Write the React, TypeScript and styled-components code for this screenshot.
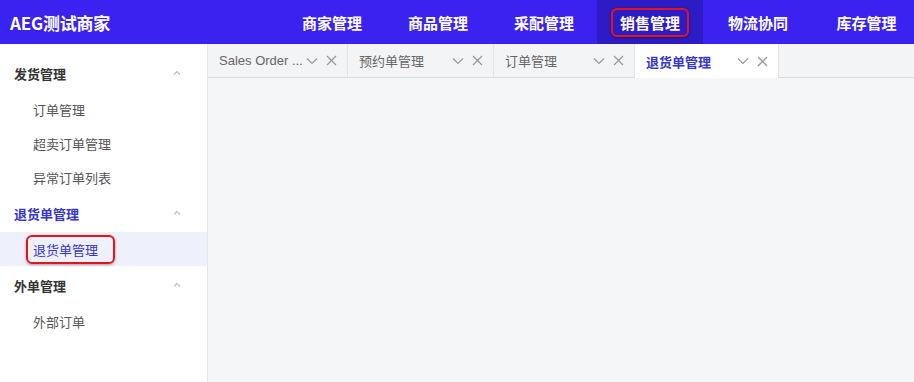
import React from "react";
import styled, { createGlobalStyle } from "styled-components";

const Global = createGlobalStyle`
  html, body { margin: 0; padding: 0; }
  body {
    font-family: "Inter", "Noto Sans CJK SC", sans-serif;
    background: #f5f6f8;
  }
  * { box-sizing: border-box; }
`;

const Page = styled.div`
  width: 914px;
  height: 382px;
  display: flex;
  flex-direction: column;
  overflow: hidden;
`;

const Header = styled.header`
  height: 44px;
  background: #3a22f0;
  display: flex;
  align-items: stretch;
  flex-shrink: 0;
`;

const Logo = styled.div`
  width: 279px;
  flex-shrink: 0;
  padding-left: 10px;
  display: flex;
  align-items: center;
  color: #fff;
  font-family: "Noto Sans CJK SC", sans-serif;
  font-weight: 700;
  font-size: 17px;
  letter-spacing: -0.2px;
`;

const Nav = styled.nav`
  display: flex;
  align-items: stretch;
`;

const NavItem = styled.div<{ $active?: boolean; $w: number }>`
  width: ${(p) => p.$w}px;
  flex-shrink: 0;
  display: flex;
  align-items: center;
  justify-content: center;
  color: #fff;
  font-family: "Noto Sans CJK SC", sans-serif;
  font-weight: 600;
  font-size: 15px;
  background: ${(p) => (p.$active ? "#2d1bc6" : "transparent")};
`;

const Mark = styled.span`
  border: 2px solid #e4141b;
  border-radius: 6px;
  box-shadow: 0 1px 3px rgba(0, 0, 0, 0.35);
  padding: 2px 7px;
  margin: 0 -9px;
`;

const Body = styled.div`
  flex: 1;
  display: flex;
  min-height: 0;
`;

const Sidebar = styled.aside`
  width: 208px;
  background: #fff;
  border-right: 1px solid #e6e6e6;
  padding-top: 10px;
  flex-shrink: 0;
`;

const GroupHead = styled.div<{ $active?: boolean }>`
  height: 38px;
  display: flex;
  align-items: center;
  justify-content: space-between;
  padding: 0 26px 0 14px;
  font-family: "Noto Sans CJK SC", sans-serif;
  font-weight: 700;
  font-size: 13px;
  color: ${(p) => (p.$active ? "#3535c8" : "#333")};
`;

const Item = styled.div<{ $active?: boolean }>`
  height: 34px;
  display: flex;
  align-items: center;
  padding-left: 33px;
  font-family: "Noto Sans CJK SC", sans-serif;
  font-size: 13px;
  color: ${(p) => (p.$active ? "#3535c8" : "#555")};
  background: ${(p) => (p.$active ? "#eef0fb" : "transparent")};
`;

const ItemMark = styled.span`
  border: 2px solid #e4141b;
  border-radius: 6px;
  box-shadow: 0 1px 3px rgba(0, 0, 0, 0.35);
  padding: 3px 15px 3px 5px;
  margin-left: -7px;
`;

const Main = styled.main`
  flex: 1;
  display: flex;
  flex-direction: column;
  background: #f5f6f8;
`;

const TabBar = styled.div`
  height: 34px;
  display: flex;
  background: #f3f4f6;
  border-bottom: 1px solid #dcdcdc;
`;

const Tab = styled.div<{ $active?: boolean; $w: number }>`
  width: ${(p) => p.$w}px;
  display: flex;
  align-items: center;
  padding: 0 10px 0 11px;
  background: ${(p) => (p.$active ? "#fff" : "transparent")};
  border-right: 1px solid #e4e4e4;
  color: ${(p) => (p.$active ? "#3535c8" : "#666")};
  font-family: "Liberation Sans", "Noto Sans CJK SC", sans-serif;
  font-weight: ${(p) => (p.$active ? 600 : 400)};
  font-size: 13px;
  margin-bottom: ${(p) => (p.$active ? "-1px" : "0")};
`;

const TabLabel = styled.span`
  flex: 1;
  white-space: nowrap;
  overflow: hidden;
`;

const TabIcons = styled.span`
  display: flex;
  align-items: center;
  gap: 8px;
  color: #999;
`;

const ChevronUp = () => (
  <svg width="8" height="6" viewBox="0 0 8 6" fill="none" stroke="#bbb" strokeWidth="1.1">
    <path d="M1 4.5 L4 1.5 L7 4.5" />
  </svg>
);

const ChevronDown = () => (
  <svg width="12" height="8" viewBox="0 0 12 8" fill="none" stroke="#999" strokeWidth="1.2">
    <path d="M1 1.5 L6 6.5 L11 1.5" />
  </svg>
);

const Close = () => (
  <svg width="11" height="11" viewBox="0 0 11 11" fill="none" stroke="#999" strokeWidth="1.3">
    <path d="M1 1 L10 10 M10 1 L1 10" />
  </svg>
);

const navItems = [
  { label: "商家管理", w: 106 },
  { label: "商品管理", w: 106 },
  { label: "采配管理", w: 106 },
  { label: "销售管理", w: 106, active: true },
  { label: "物流协同", w: 110 },
  { label: "库存管理", w: 107 },
];

const tabs = [
  { label: "Sales Order ...", w: 140 },
  { label: "预约单管理", w: 146 },
  { label: "订单管理", w: 141 },
  { label: "退货单管理", w: 144, active: true },
];

export default function App() {
  return (
    <Page>
      <Global />
      <Header>
        <Logo>AEG测试商家</Logo>
        <Nav>
          {navItems.map((n) => (
            <NavItem key={n.label} $w={n.w} $active={n.active}>
              {n.active ? <Mark>{n.label}</Mark> : n.label}
            </NavItem>
          ))}
        </Nav>
      </Header>
      <Body>
        <Sidebar>
          <GroupHead>
            发货管理
            <ChevronUp />
          </GroupHead>
          <Item>订单管理</Item>
          <Item>超卖订单管理</Item>
          <Item>异常订单列表</Item>
          <GroupHead $active>
            退货单管理
            <ChevronUp />
          </GroupHead>
          <Item $active>
            <ItemMark>退货单管理</ItemMark>
          </Item>
          <GroupHead>
            外单管理
            <ChevronUp />
          </GroupHead>
          <Item>外部订单</Item>
        </Sidebar>
        <Main>
          <TabBar>
            {tabs.map((t) => (
              <Tab key={t.label} $w={t.w} $active={t.active}>
                <TabLabel>{t.label}</TabLabel>
                <TabIcons>
                  <ChevronDown />
                  <Close />
                </TabIcons>
              </Tab>
            ))}
          </TabBar>
        </Main>
      </Body>
    </Page>
  );
}
